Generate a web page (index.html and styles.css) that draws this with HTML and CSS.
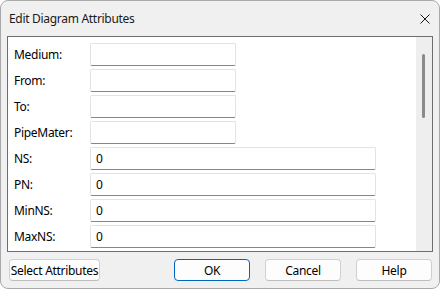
FILE: index.html
```html
<!DOCTYPE html>
<html>
<head>
<meta charset="utf-8">
<link rel="stylesheet" href="styles.css">
</head>
<body>
<div class="dialog">
  <div class="titlebar">
    <span class="title">Edit Diagram Attributes</span>
    <svg class="close" width="10" height="10" viewBox="0 0 10 10"><path d="M0.5 0.5 L9.5 9.5 M9.5 0.5 L0.5 9.5" stroke="#1a1a1a" stroke-width="1" fill="none"/></svg>
  </div>
  <div class="panel">
    <div class="fields">
      <div class="row"><span class="label">Medium:</span><div class="input short"></div></div>
      <div class="row"><span class="label">From:</span><div class="input short"></div></div>
      <div class="row"><span class="label">To:</span><div class="input short"></div></div>
      <div class="row"><span class="label">PipeMater:</span><div class="input short"></div></div>
      <div class="row"><span class="label">NS:</span><div class="input long">0</div></div>
      <div class="row"><span class="label">PN:</span><div class="input long">0</div></div>
      <div class="row"><span class="label">MinNS:</span><div class="input long">0</div></div>
      <div class="row"><span class="label">MaxNS:</span><div class="input long">0</div></div>
    </div>
    <div class="scrollbar"><div class="thumb"></div></div>
  </div>
  <div class="footer">
    <button class="btn wide">Select Attributes</button>
    <button class="btn primary">OK</button>
    <button class="btn">Cancel</button>
    <button class="btn">Help</button>
  </div>
</div>
</body>
</html>
```

FILE: styles.css
```css
* { box-sizing: border-box; }
html, body { margin: 0; padding: 0; }
body {
  font-family: "Noto Sans", "Open Sans", sans-serif;
  font-size: 12px;
  letter-spacing: -0.3px;
  color: #000;
  background: #fff;
}
.dialog {
  width: 440px;
  height: 289px;
  border: 1px solid #a9a9a9;
  border-radius: 8px;
  background: #f0f0f0;
  display: flex;
  flex-direction: column;
  overflow: hidden;
}
.titlebar {
  height: 35px;
  display: flex;
  align-items: center;
  padding: 0 9px 0 8px;
  justify-content: space-between;
}
.title { color: #1a1a1a; }
.close { display: block; }
.panel {
  margin: 0 6px;
  height: 216px;
  border: 1px solid #6e6e6e;
  display: flex;
  overflow: hidden;
}
.fields {
  flex: 1;
  background: #fff;
  padding: 6px 0 0 6px;
}
.row {
  display: flex;
  align-items: center;
  height: 23px;
  margin-bottom: 3px;
}
.label { width: 76px; }
.input {
  height: 23px;
  border: 1px solid #e3e3e3;
  border-bottom: 1px solid #868686;
  border-radius: 2px;
  background: #fff;
  padding: 0 5px;
  display: flex;
  align-items: center;
}
.short { width: 146px; }
.long { width: 286px; }
.scrollbar {
  width: 16px;
  background: #eeeeee;
  position: relative;
}
.thumb {
  position: absolute;
  left: 6px;
  top: 17px;
  width: 3px;
  height: 64px;
  border-radius: 2px;
  background: #8a8a8a;
}
.footer {
  display: flex;
  padding: 7px 7px 0 8px;
  gap: 15px;
}
.btn {
  font: inherit;
  letter-spacing: inherit;
  white-space: nowrap;
  color: #000;
  height: 22px;
  width: 76px;
  padding: 0;
  border: 1px solid #d0d0d0;
  border-bottom-color: #bdbdbd;
  border-radius: 4px;
  background: #fdfdfd;
}
.wide { width: 91px; margin-right: auto; }
.primary { border: 1px solid #0067c0; }
```
